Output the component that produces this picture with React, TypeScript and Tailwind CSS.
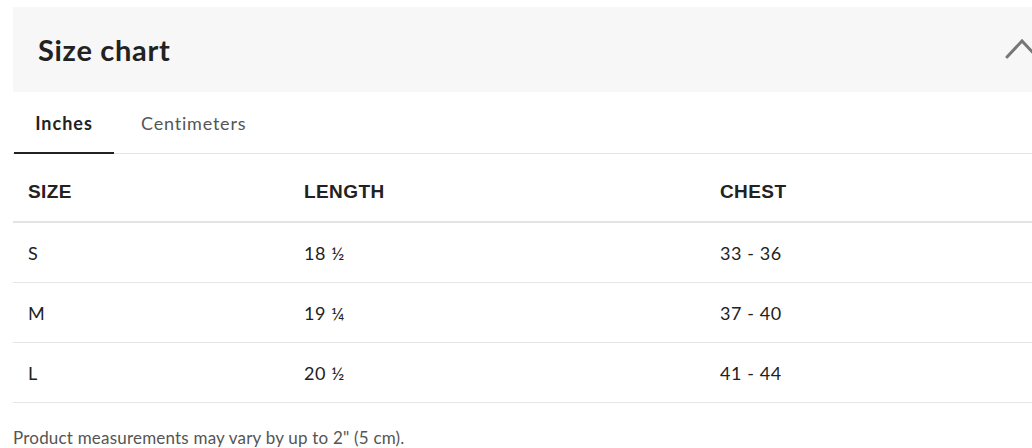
import React, { useState } from 'react';

// Size data for both unit systems
const rows = {
  inches: [
    { size: 'S', length: '18 ½', chest: '33 - 36' },
    { size: 'M', length: '19 ¼', chest: '37 - 40' },
    { size: 'L', length: '20 ½', chest: '41 - 44' },
  ],
  cm: [
    { size: 'S', length: '47', chest: '84 - 91' },
    { size: 'M', length: '49', chest: '94 - 102' },
    { size: 'L', length: '52', chest: '104 - 112' },
  ],
};

const body = { fontFamily: 'Lato, "Open Sans", sans-serif' };
const head = { fontFamily: '"Liberation Sans", Arial, sans-serif' };

const App: React.FC = () => {
  const [unit, setUnit] = useState<'inches' | 'cm'>('inches');

  return (
    <div className="w-[1032px] h-[448px] overflow-hidden bg-white" style={body}>
      <div className="pt-[7px] pl-[13px] w-[1060px]">
        {/* Collapsible header */}
        <div className="h-[85px] bg-[#f7f7f7] flex items-center justify-between pl-[25px] pr-[21px]">
          <h2 className="text-[29px] font-bold text-[#222] tracking-[0.7px]">Size chart</h2>
          <svg width="34" height="22" viewBox="0 0 34 22" className="-mt-[3px]">
            <polyline points="2,20 17,4 32,20" fill="none" stroke="#777" strokeWidth="3" strokeLinecap="round" />
          </svg>
        </div>

        {/* Unit tabs */}
        <div className="flex border-b border-[#e5e5e5] h-[62px] w-[1019px]">
          <button
            onClick={() => setUnit('inches')}
            className={`w-[100px] ml-[1px] pt-[3px] text-[18px] tracking-[1px] border-b-2 -mb-[1px] ${unit === 'inches' ? 'font-bold text-[#222] border-[#222]' : 'text-[#666] border-transparent'}`}
          >
            Inches
          </button>
          <button
            onClick={() => setUnit('cm')}
            className={`ml-[4px] px-[23px] pt-[3px] text-[18px] tracking-[0.8px] border-b-2 -mb-[1px] ${unit === 'cm' ? 'font-bold text-[#222] border-[#222]' : 'text-[#555] border-transparent'}`}
          >
            Centimeters
          </button>
        </div>

        {/* Table */}
        <div className="w-[1019px]">
          <div className="grid grid-cols-[276px_416px_1fr] h-[69px] items-center border-b-2 border-[#e3e3e3] text-[19px] font-bold text-[#222] tracking-[0.4px]" style={head}>
            <div className="pl-[15px] pt-[10px]">SIZE</div>
            <div className="pl-[15px] pt-[10px]">LENGTH</div>
            <div className="pl-[15px] pt-[10px]">CHEST</div>
          </div>
          {rows[unit].map((r) => (
            <div key={r.size} className="grid grid-cols-[276px_416px_1fr] h-[60px] items-center border-b border-[#e5e5e5] text-[18px] tracking-[0.6px] text-[#222]">
              <div className="pl-[15px] pt-[1px]">{r.size}</div>
              <div className="pl-[15px] pt-[1px]">{r.length}</div>
              <div className="pl-[15px] pt-[1px]">{r.chest}</div>
            </div>
          ))}
        </div>

        <p className="mt-[22px] text-[17px] tracking-[0.2px] text-[#555]">Product measurements may vary by up to 2" (5 cm).</p>
      </div>
    </div>
  );
};

export default App;
